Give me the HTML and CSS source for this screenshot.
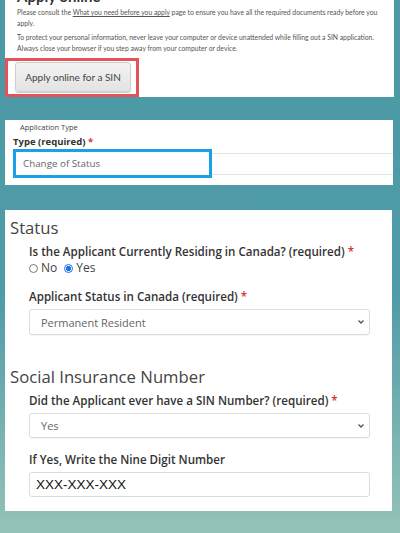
FILE: index.html
```html
<!DOCTYPE html>
<html lang="en">
<head>
    <meta charset="UTF-8">
    <meta name="viewport" content="width=device-width, initial-scale=1.0">
    <title>Apply for a SIN</title>
    <link rel="stylesheet" href="styles.css">
</head>
<body>

    <!-- Apply online intro -->
    <div class="card intro">
        <h2 class="intro-title">Apply online</h2>
        <p class="intro-text">Please consult the <a href="#">What you need before you apply</a> page to ensure you have all the required documents ready before you apply.</p>
        <p class="intro-text">To protect your personal information, never leave your computer or device unattended while filling out a SIN application. Always close your browser if you step away from your computer or device.</p>
        <div class="highlight-red">
            <button class="apply-button">Apply online for a SIN</button>
        </div>
    </div>

    <!-- Application type -->
    <div class="card type-card">
        <p class="legend">Application Type</p>
        <p class="type-label">Type (required) <span class="req">*</span></p>
        <div class="type-row">
            <div class="highlight-blue">Change of Status</div>
            <div class="type-rest"></div>
        </div>
    </div>

    <!-- Status + SIN -->
    <div class="card form-card">
        <h3 class="section-title">Status</h3>
        <div class="field">
            <p class="label">Is the Applicant Currently Residing in Canada? (required) <span class="req">*</span></p>
            <div class="radios">
                <label><span class="radio"></span>No</label>
                <label><span class="radio checked"></span>Yes</label>
            </div>
        </div>
        <div class="field gap-lg">
            <p class="label">Applicant Status in Canada (required) <span class="req">*</span></p>
            <div class="select">
                <span>Permanent Resident</span>
                <svg width="8" height="6" viewBox="0 0 8 6"><path d="M1.5 1.5 L4 4 L6.5 1.5" fill="none" stroke="#555" stroke-width="1.3"/></svg>
            </div>
        </div>

        <h3 class="section-title sin-title">Social Insurance Number</h3>
        <div class="field">
            <p class="label">Did the Applicant ever have a SIN Number? (required) <span class="req">*</span></p>
            <div class="select short">
                <span>Yes</span>
                <svg width="8" height="6" viewBox="0 0 8 6"><path d="M1.5 1.5 L4 4 L6.5 1.5" fill="none" stroke="#555" stroke-width="1.3"/></svg>
            </div>
        </div>
        <div class="field gap-md">
            <p class="label">If Yes, Write the Nine Digit Number</p>
            <div class="text-input">XXX-XXX-XXX</div>
        </div>
    </div>

</body>
</html>
```

FILE: styles.css
```css
/* Basic reset */
* {
    margin: 0;
    padding: 0;
    box-sizing: border-box;
}

body {
    font-family: "Open Sans", sans-serif;
    background: linear-gradient(to bottom, #4c99a6 0%, #4f9ba8 55%, #7fb6b2 85%, #94c3b8 100%);
    height: 533px;
    overflow: hidden;
}

.card {
    background-color: #fff;
    margin: 0 6px 0 5px;
}

/* Intro card */
.intro {
    display: flow-root;
    overflow: visible;
    padding: 0 0 0 12px;
    height: 97px;
}

.intro-title {
    font-family: Lato, sans-serif;
    font-size: 15px;
    line-height: 16px;
    margin-top: -12px;
    color: #333;
}

.intro-text {
    font-family: Lato, sans-serif;
    font-size: 6.8px;
    line-height: 11px;
    color: #555;
    margin-top: 3px;
    padding-right: 8px;
}

.intro-text a {
    color: #555;
}

.highlight-red {
    display: inline-block;
    margin: 4px 0 0 -12px;
    border: 3px solid #e5535a;
    padding: 1px 5px 2px 7px;
}

.apply-button {
    display: block;
    width: 116px;
    height: 30px;
    font-family: Lato, sans-serif;
    font-size: 10px;
    color: #444;
    background: linear-gradient(#f3f3f3, #e3e3e3);
    border: 1px solid #cfcfcf;
    border-radius: 3px;
    box-shadow: 0 1px 1px rgba(0, 0, 0, 0.2);
}

/* Application type card */
.type-card {
    margin-top: 23px;
    margin-right: 7px;
    height: 65px;
    padding: 2px 0 0 8px;
}

.legend {
    font-size: 7.5px;
    line-height: 11px;
    color: #444;
    padding-left: 7px;
}

.type-label {
    font-size: 9.5px;
    font-weight: 700;
    line-height: 13px;
    color: #333;
    margin-top: 2px;
}

.type-row {
    display: flex;
    align-items: center;
    margin-top: 1px;
}

.highlight-blue {
    width: 199px;
    height: 29px;
    border: 3px solid #1aa0e6;
    font-size: 9.8px;
    color: #666;
    line-height: 23px;
    padding-left: 7px;
}

.type-rest {
    flex: 1;
    height: 22px;
    border-top: 1px solid #e2e2e2;
    border-bottom: 1px solid #e2e2e2;
}

/* Status / SIN card */
.form-card {
    margin-top: 25px;
    margin-right: 8px;
    padding: 6px 22px 14px 5px;
}

.section-title {
    font-weight: 400;
    font-size: 16.7px;
    line-height: 24px;
    color: #444;
}

.sin-title {
    margin-top: 30px;
}

.field {
    padding-left: 19px;
    margin-top: 4px;
}

.gap-lg {
    margin-top: 13px;
}

.gap-md {
    margin-top: 14px;
}

.label {
    font-size: 11.6px;
    font-weight: 600;
    line-height: 16px;
    color: #333;
}

.req {
    color: #d3353a;
}

.radios {
    display: flex;
    gap: 7px;
    font-size: 12px;
    line-height: 16px;
    color: #444;
}

.radios label {
    display: flex;
    align-items: center;
    gap: 3px;
}

.radio {
    width: 9px;
    height: 9px;
    border: 1px solid #777;
    border-radius: 50%;
}

.radio.checked {
    border: 1px solid #1a73e8;
    background: radial-gradient(circle, #1a73e8 0 2.4px, #fff 2.9px);
}

.select {
    display: flex;
    align-items: center;
    justify-content: space-between;
    height: 26px;
    margin-top: 4px;
    border: 1px solid #dcdcdc;
    border-radius: 3px;
    padding: 0 4px 0 11px;
    font-size: 11px;
    color: #666;
    box-shadow: 0 1px 1px rgba(0, 0, 0, 0.04);
}

.select.short {
    height: 25px;
}

.text-input {
    height: 25px;
    margin-top: 4px;
    border: 1px solid #dcdcdc;
    border-radius: 3px;
    padding-left: 6px;
    font-family: "Liberation Sans", Arial, sans-serif;
    font-size: 13.5px;
    line-height: 23px;
    color: #111;
}
```
